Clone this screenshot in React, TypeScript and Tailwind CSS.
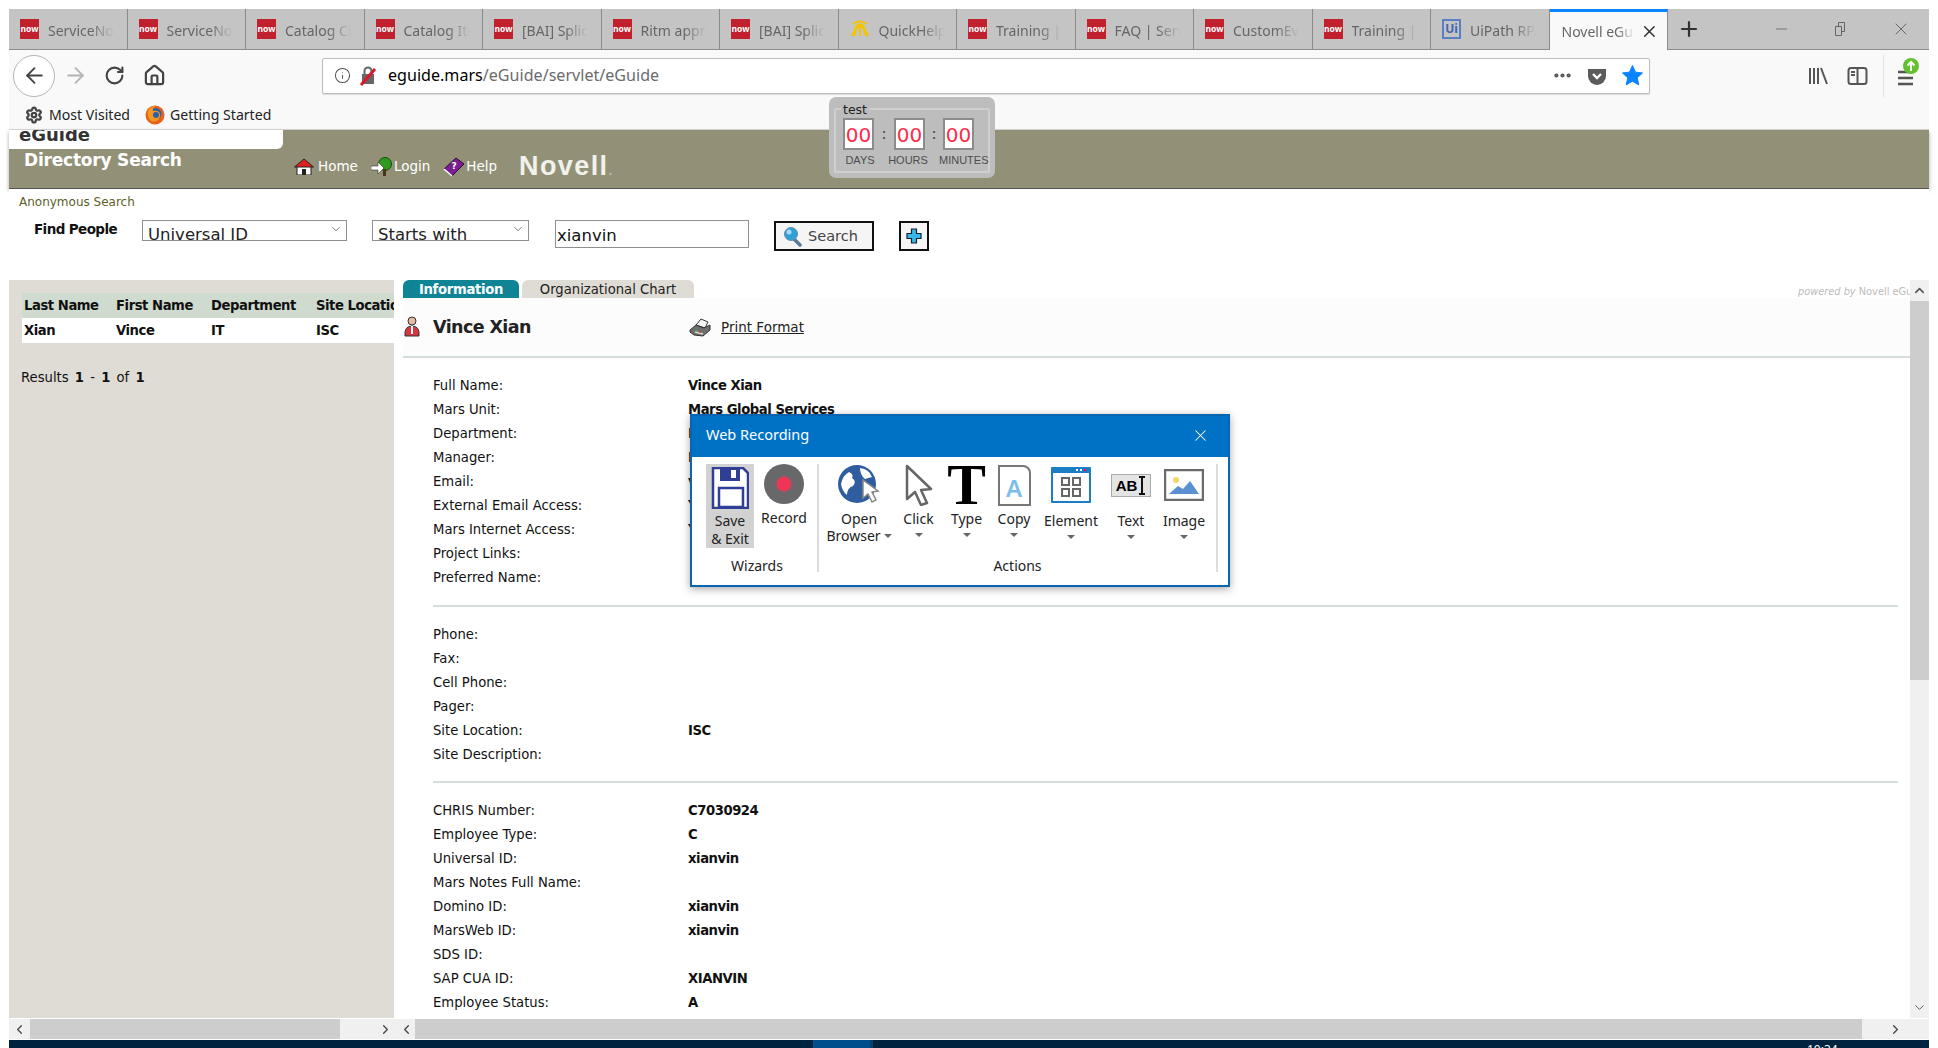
import { ArrowLeft, ArrowRight, ChevronDown, ChevronLeft, ChevronRight, ChevronUp, House, Info, MoreHorizontal, Plus, RotateCw, Settings, X } from "lucide-react";

const ui = "font-['Noto_Sans',sans-serif]";
const page = "font-['DejaVu_Sans',sans-serif]";

const tabs = [
    { title: "ServiceNow", icon: "now" },
    { title: "ServiceNow", icon: "now" },
    { title: "Catalog Client", icon: "now" },
    { title: "Catalog Item", icon: "now" },
    { title: "[BAI] Splice", icon: "now" },
    { title: "Ritm approval", icon: "now" },
    { title: "[BAI] Splice", icon: "now" },
    { title: "QuickHelp", icon: "qh" },
    { title: "Training | Service", icon: "now" },
    { title: "FAQ | Service", icon: "now" },
    { title: "CustomEvent", icon: "now" },
    { title: "Training | Service", icon: "now" },
    { title: "UiPath RPA", icon: "ui" },
];

const group1 = [
    ["Full Name:", "Vince Xian"],
    ["Mars Unit:", "Mars Global Services"],
    ["Department:", "IT"],
    ["Manager:", "L"],
    ["Email:", "v"],
    ["External Email Access:", "Y"],
    ["Mars Internet Access:", "Y"],
    ["Project Links:", ""],
    ["Preferred Name:", ""],
];
const group2 = [
    ["Phone:", ""],
    ["Fax:", ""],
    ["Cell Phone:", ""],
    ["Pager:", ""],
    ["Site Location:", "ISC"],
    ["Site Description:", ""],
];
const group3 = [
    ["CHRIS Number:", "C7030924"],
    ["Employee Type:", "C"],
    ["Universal ID:", "xianvin"],
    ["Mars Notes Full Name:", ""],
    ["Domino ID:", "xianvin"],
    ["MarsWeb ID:", "xianvin"],
    ["SDS ID:", ""],
    ["SAP CUA ID:", "XIANVIN"],
    ["Employee Status:", "A"],
];

const Favicon = ({ kind }: { kind: string }) => {
    if (kind === "qh") {
        return (
            <svg width="20" height="20" viewBox="0 0 20 20" className="shrink-0">
                <path d="M1 17 L6 6 Q10 3 14 6 L19 17 H15 L12.5 9 H11 V17 H9 V9 H7.5 L5 17 Z" fill="#f5c400" />
                <path d="M3 5 Q10 0 17 5" stroke="#f5c400" strokeWidth="2" fill="none" />
            </svg>
        );
    }
    if (kind === "ui") {
        return (
            <span className="w-[19px] h-[20px] shrink-0 border-2 border-[#5b7fc4] text-[#3f66b0] text-[12px] font-bold leading-[16px] text-center">Ui</span>
        );
    }
    return (
        <span className="w-[19px] h-[20px] shrink-0 bg-[#c1202d] text-white text-[8.5px] font-bold leading-[20px] text-center">now</span>
    );
};

const TabBar = () => (
    <div className={`flex h-[41px] bg-[#c4c4c4] border-b border-[#8c8c8c] ${ui}`}>
        {tabs.map((t, i) => (
            <div key={i} className="w-[118.5px] flex items-center gap-[9px] pl-[11px] pr-[6px] border-r border-[#8a8a8a]">
                <Favicon kind={t.icon} />
                <span className="w-[66px] text-[14px] pt-[2px] text-[#666] whitespace-nowrap overflow-hidden [mask-image:linear-gradient(to_right,black_65%,transparent)]">{t.title}</span>
            </div>
        ))}
        <div className="w-[118px] h-[41px] flex items-center pl-[12px] pr-[8px] bg-[#f9f9f9] border-t-[3px] border-[#0a84ff] border-r border-r-[#8a8a8a]">
            <span className="text-[14px] text-[#666] whitespace-nowrap overflow-hidden w-[74px] [mask-image:linear-gradient(to_right,black_75%,transparent)]">Novell eGuide</span>
            <X size={19} strokeWidth={2} className="text-[#333] ml-[5px]" />
        </div>
        <Plus size={24} strokeWidth={2.2} className="text-[#333] ml-[9px] mt-[8px]" />
        <div className="flex-1 flex items-center justify-end text-[#666]">
            <svg width="14" height="14" viewBox="0 0 14 14" className="mr-[44px]"><path d="M1 7h11" stroke="#777" strokeWidth="1" /></svg>
            <svg width="14" height="16" viewBox="0 0 14 16" className="mr-[44px]"><path d="M2.5 5.5h6v9h-6zM5.5 5V1.5h6v9H9" stroke="#666" strokeWidth="1" fill="none" /></svg>
            <X size={20} strokeWidth={1} className="mr-[18px] text-[#555]" />
        </div>
    </div>
);

const NavBar = () => (
    <div className="flex items-center h-[53px] bg-[#f9f9f9] pl-[4px] pr-[12px] pb-[2px]">
        <div className="w-[42px] h-[42px] rounded-full bg-white border border-[#b5b5b5] flex items-center justify-center shrink-0">
            <ArrowLeft size={25} strokeWidth={1.8} className="text-[#444]" />
        </div>
        <ArrowRight size={25} strokeWidth={1.8} className="text-[#b4b4b4] ml-[8px] shrink-0" />
        <RotateCw size={21} strokeWidth={2.4} className="text-[#444] ml-[16px] shrink-0" />
        <House size={23} strokeWidth={2.3} className="text-[#444] ml-[18px] shrink-0" />
        <div className={`w-[1328px] h-[36px] ml-[156px] bg-white border border-[#bdbdbd] rounded-[2px] shadow-[0_1px_1px_rgba(0,0,0,0.12)] flex items-center pl-[11px] pr-[5px] shrink-0 ${ui}`}>
            <Info size={17} strokeWidth={1.5} className="text-[#555] shrink-0" />
            <svg width="18" height="20" viewBox="0 0 18 20" className="ml-[8px] shrink-0">
                <rect x="3" y="8" width="12" height="10" fill="#666" />
                <path d="M5.5 8V5a3.5 3.5 0 0 1 7 0v3" stroke="#666" strokeWidth="2" fill="none" />
                <path d="M2 19 L16 3" stroke="#e0162b" strokeWidth="3" />
            </svg>
            <span className="text-[16.1px] ml-[11px] text-black">eguide.mars<span className="text-[#6b6b6b]">/eGuide/servlet/eGuide</span></span>
            <div className="flex-1" />
            <MoreHorizontal size={21} strokeWidth={2.8} className="text-[#555]" />
            <svg width="20" height="20" viewBox="0 0 20 20" className="ml-[14px]">
                <path d="M1 3h18v7a9 9 0 0 1-18 0z" fill="#5c5c5c" />
                <path d="M6 8l4 4 4-4" stroke="#fff" strokeWidth="2.4" fill="none" />
            </svg>
            <svg width="23" height="23" viewBox="0 0 24 24" className="ml-[14px]">
                <path d="M12 1.5l3.2 7 7.3.8-5.5 5 1.6 7.5L12 18l-6.600 3.800 1.600-7.500-5.500-5 7.300-.8z" fill="#0a84ff" stroke="#0a84ff" strokeLinejoin="round" />
            </svg>
        </div>
        <div className="flex-1" />
        <svg width="21" height="20" viewBox="0 0 21 20" className="shrink-0">
            <path d="M2 2v16M6 2v16M10 2v16M13 2l6 16" stroke="#555" strokeWidth="2" fill="none" />
        </svg>
        <svg width="21" height="20" viewBox="0 0 21 20" className="ml-[18px] shrink-0">
            <rect x="1.500" y="2" width="18" height="16" rx="2.500" stroke="#555" strokeWidth="2" fill="none" />
            <path d="M10.500 2v16M4 6h4M4 9h4" stroke="#555" strokeWidth="2" />
        </svg>
        <div className="w-px h-[42px] bg-[#e2e2e2] ml-[15px] shrink-0" />
        <div className="relative w-[20px] h-[20px] ml-[13px] shrink-0">
            <svg width="18" height="18" viewBox="0 0 18 18" className="mt-[3px]"><path d="M1 3h15M1 9h15M1 15h15" stroke="#555" strokeWidth="2.500" /></svg>
            <svg width="16" height="16" viewBox="0 0 16 16" className="absolute -top-[8px] left-[6px]">
                <circle cx="8" cy="8" r="8" fill="#62c22e" />
                <path d="M8 13V4M4.500 7.500L8 4l3.500 3.500" stroke="#fff" strokeWidth="2" fill="none" />
            </svg>
        </div>
    </div>
);

const Bookmarks = () => (
    <div className={`flex items-center h-[27px] pb-[2px] bg-[#f9f9f9] border-b border-[#dcdcdc] pl-[16px] text-[14.1px] text-[#222] ${ui}`}>
        <Settings size={18} strokeWidth={3} className="text-[#444]" />
        <span className="ml-[6px]">Most Visited</span>
        <svg width="20" height="20" viewBox="0 0 20 20" className="ml-[15px]">
            <circle cx="10" cy="10" r="9.500" fill="#e8611a" />
            <circle cx="10.500" cy="9" r="6" fill="#2a5fb0" />
            <path d="M3 6 Q5 1 11 1 Q7 3 8 6 Q11 5 14 7 Q17 11 13 15 Q9 18 5 15 Q2 11 3 6z" fill="#f39a1e" />
            <circle cx="11" cy="10" r="3" fill="#2a5fb0" />
        </svg>
        <span className="ml-[5px]">Getting Started</span>
    </div>
);

const HomeIcon = () => (
    <svg width="20" height="17" viewBox="0 0 20 17" className="shrink-0">
        <rect x="3" y="8" width="14" height="9" fill="#fff" stroke="#222" />
        <rect x="8" y="11" width="4" height="6" fill="#222" />
        <path d="M0.500 9L10 1l9.500 8z" fill="#e01f1f" stroke="#222" />
    </svg>
);

const LoginIcon = () => (
    <svg width="21" height="20" viewBox="0 0 21 20" className="shrink-0">
        <circle cx="14" cy="7" r="6.500" fill="#2f9a1f" stroke="#174d10" />
        <rect x="12" y="12" width="3" height="7" fill="#4a3418" />
        <path d="M0 9h7V5l6 6-6 6v-4H0z" fill="#fff" stroke="#333" strokeWidth="0.600" />
    </svg>
);

const HelpIcon = () => (
    <svg width="22" height="20" viewBox="0 0 22 20" className="shrink-0">
        <path d="M1 12L13 1l8 6L9 19z" fill="#7b1e8f" stroke="#2c0a33" />
        <path d="M1 12l8 7" stroke="#fff" strokeWidth="1.500" />
        <text x="8.500" y="12" fontSize="9" fontWeight="700" fill="#fff" fontFamily="DejaVu Sans">?</text>
    </svg>
);

const EGuideHeader = () => (
    <div className={`relative flex h-[59px] bg-[#929178] border-b border-[#555] shadow-[0_2px_4px_rgba(0,0,0,0.35)] ${page}`}>
        <div className="w-[274px] shrink-0">
            <div className="h-[19px] bg-white rounded-br-[6px] overflow-hidden pl-[10px]">
                <div className="text-[#333] text-[18px] font-bold leading-[20px] -mt-[5px]">eGuide</div>
            </div>
            <div className="text-white text-[17px] font-bold pl-[15px] leading-[22px] tracking-[-0.2px]">Directory Search</div>
        </div>
        <div className="flex items-center h-[17px] mt-[28px] ml-[11px] text-white text-[13.5px]">
            <HomeIcon />
            <span className="ml-[4px]">Home</span>
            <span className="ml-[13px]"><LoginIcon /></span>
            <span className="ml-[2px]">Login</span>
            <span className="ml-[13px]"><HelpIcon /></span>
            <span className="ml-[1px]">Help</span>
            <span className="ml-[22px] text-[27px] font-['Liberation_Sans',sans-serif] font-bold tracking-[1.4px] text-[#f2f2ec]">Novell<span className="text-[#b9b9aa] text-[14px]">.</span></span>
        </div>
    </div>
);

const Timer = () => (
    <div className={`absolute left-[829px] top-[97px] w-[166px] h-[81px] bg-[#bdbdbd] rounded-[7px] px-[5px] pt-[11px] pb-[5px] ${page}`}>
        <div className="relative w-full h-full border-2 border-[#cfcfcf] rounded-[2px] pl-[7px] pt-[8px]">
            <span className="absolute -top-[7px] left-[5px] bg-[#bdbdbd] px-[2px] text-[12.5px] leading-[14px] text-[#222]">test</span>
            <div className="flex items-center">
                <span className="w-[31px] h-[32px] bg-white border-2 border-[#8c8c8c] text-[#ff2b4a] text-[20px] leading-[30px] text-center">00</span>
                <span className="w-[20px] text-center text-[#444] text-[15px]">:</span>
                <span className="w-[31px] h-[32px] bg-white border-2 border-[#8c8c8c] text-[#ff2b4a] text-[20px] leading-[30px] text-center">00</span>
                <span className="w-[18px] text-center text-[#444] text-[15px]">:</span>
                <span className="w-[31px] h-[32px] bg-white border-2 border-[#8c8c8c] text-[#ff2b4a] text-[20px] leading-[30px] text-center">00</span>
            </div>
            <div className="flex mt-[3px] text-[11px] leading-[14px] text-[#4d4d4d] font-['Liberation_Sans',sans-serif]">
                <span className="w-[34px] text-center">DAYS</span>
                <span className="w-[62px] text-center">HOURS</span>
                <span className="w-[46px] text-center">MINUTES</span>
            </div>
        </div>
    </div>
);

const SearchBar = () => (
    <div className={`relative h-[91px] bg-white ${page}`}>
        <div className="pl-[10px] pt-[5px] text-[12px] leading-[16px] text-[#5e5e28]">Anonymous Search</div>
        <div className="flex items-start pl-[25px] mt-[10px]">
            <span className="w-[108px] text-[13.5px] font-bold tracking-[-0.6px] text-[#111] leading-[18px]">Find People</span>
            <div className="w-[205px] h-[21px] border border-[#8f8f8f] overflow-hidden flex justify-between pl-[5px] pr-[3px] text-[16.5px] leading-[28px] text-[#222]">
                <span>Universal ID</span>
                <ChevronDown size={14} strokeWidth={1} className="text-[#222] mt-[1px]" />
            </div>
            <div className="w-[157px] h-[21px] ml-[25px] border border-[#8f8f8f] overflow-hidden flex justify-between pl-[5px] pr-[3px] text-[16.5px] leading-[28px] text-[#222]">
                <span>Starts with</span>
                <ChevronDown size={14} strokeWidth={1} className="text-[#222] mt-[1px]" />
            </div>
            <div className="w-[194px] h-[28px] ml-[26px] border border-[#8f8f8f] pl-[1px] text-[16.5px] leading-[29px] text-[#111]">xianvin</div>
            <div className="w-[100px] h-[30px] ml-[25px] mt-[1px] border-2 border-[#111] bg-[#f5f5f5] flex items-center pl-[7px]">
                <svg width="20" height="21" viewBox="0 0 20 21">
                    <path d="M11 13l6 6" stroke="#5a7a95" strokeWidth="3.500" strokeLinecap="round" />
                    <circle cx="8" cy="8" r="6.500" fill="#2f9fd8" stroke="#6d8aa0" />
                    <circle cx="6" cy="6" r="2.500" fill="#a8dcf5" />
                </svg>
                <span className="ml-[5px] text-[14.5px] text-[#444] leading-[20px]">Search</span>
            </div>
            <div className="w-[30px] h-[30px] ml-[25px] mt-[1px] border-2 border-[#111] bg-[#f5f5f5] flex items-center justify-center">
                <svg width="16" height="16" viewBox="0 0 16 16">
                    <path d="M5.500 1h5v4.500H15v5h-4.500V15h-5v-4.500H1v-5h4.500z" fill="#35b8e8" stroke="#123" strokeWidth="1.200" />
                </svg>
            </div>
        </div>
    </div>
);

const Sidebar = () => (
    <div className={`w-[385px] shrink-0 bg-[#dfdcd5] pt-[13px] pl-[13px] overflow-hidden text-[13.2px] leading-[26px] text-[#111] ${page}`}>
        <div className="flex h-[25px] bg-[#d0dbd0] font-bold tracking-[-0.45px] whitespace-nowrap overflow-hidden pl-[2px]">
            <span className="w-[92px] shrink-0">Last Name</span>
            <span className="w-[95px] shrink-0">First Name</span>
            <span className="w-[105px] shrink-0">Department</span>
            <span className="shrink-0">Site Location</span>
        </div>
        <div className="flex h-[25px] bg-white font-bold tracking-[-0.45px] whitespace-nowrap pl-[2px]">
            <span className="w-[92px] shrink-0">Xian</span>
            <span className="w-[95px] shrink-0">Vince</span>
            <span className="w-[105px] shrink-0">IT</span>
            <span className="shrink-0">ISC</span>
        </div>
        <div className="mt-[22px] -ml-[1px] [word-spacing:2px]">Results <b>1</b> - <b>1</b> of <b>1</b></div>
    </div>
);

const FieldGroup = ({ rows }: { rows: string[][] }) => (
    <div className="ml-[30px]">
        {rows.map(([label, value]) => (
            <div key={label} className="flex h-[24px] items-center text-[13.2px] text-[#111] whitespace-nowrap">
                <span className="w-[255px] shrink-0">{label}</span>
                <span className="font-bold tracking-[-0.45px]">{value}</span>
            </div>
        ))}
    </div>
);

const Detail = () => (
    <div className={`relative flex-1 min-w-0 pl-[9px] overflow-hidden ${page}`}>
        <div className="flex h-[18px] justify-between text-[13.2px] leading-[19px]">
            <div className="flex">
                <span className="w-[116px] bg-[#0e8494] rounded-t-[6px] text-white font-bold tracking-[-0.3px] text-center">Information</span>
                <span className="w-[172px] ml-[3px] bg-[#dfdcd5] rounded-t-[6px] text-[#222] text-center">Organizational Chart</span>
            </div>
            <span className="w-[112px] overflow-hidden whitespace-nowrap text-[9.8px] text-[#bbb] italic leading-[23px]">powered by <span className="not-italic">Novell eGuide</span></span>
        </div>
        <div className="flex items-center h-[60px] bg-[#fcfcfc] border-b-2 border-[#d5ded9]">
            <svg width="18" height="22" viewBox="0 0 18 22" className="shrink-0">
                <circle cx="9" cy="5" r="4" fill="#e6b9a0" stroke="#333" />
                <path d="M2 20 Q1 10 9 10 Q17 10 16 20z" fill="#d8353f" stroke="#333" />
                <path d="M9 10v8" stroke="#fff" strokeWidth="2" />
            </svg>
            <span className="ml-[12px] w-[256px] text-[17.5px] font-bold tracking-[-0.6px] text-[#222]">Vince Xian</span>
            <svg width="22" height="20" viewBox="0 0 22 20" className="shrink-0">
                <path d="M7 8l5-6 7 3-3 6z" fill="#f4f4f4" stroke="#333" />
                <path d="M1 13l6-5 8 3 6-3v5l-7 6-9-1-4-3z" fill="#6f6f6f" stroke="#333" />
                <path d="M6 15l8 2" stroke="#ddd" strokeWidth="1.500" />
                <circle cx="8" cy="14" r="1" fill="#3fbf3f" />
                <circle cx="11" cy="15" r="1" fill="#e03030" />
            </svg>
            <span className="ml-[10px] text-[13.5px] text-[#222] underline">Print Format</span>
        </div>
        <div className="pt-[16px]">
            <FieldGroup rows={group1} />
        </div>
        <hr className="mt-[15px] ml-[30px] mr-[12px] border-t-2 border-[#d5ded9]" />
        <div className="pt-[16px]">
            <FieldGroup rows={group2} />
        </div>
        <hr className="mt-[14px] ml-[30px] mr-[12px] border-t-2 border-[#d5ded9]" />
        <div className="pt-[16px]">
            <FieldGroup rows={group3} />
        </div>
    </div>
);

const VScrollbar = () => (
    <div className="w-[19px] shrink-0 flex flex-col bg-[#f0f0f0] text-[#555]">
        <div className="h-[21px] flex items-center justify-center"><ChevronUp size={15} strokeWidth={2.5} /></div>
        <div className="h-[379px] bg-[#cdcdcd]" />
        <div className="flex-1" />
        <div className="h-[21px] flex items-center justify-center"><ChevronDown size={15} strokeWidth={1.500} /></div>
    </div>
);

const HScrollbars = () => (
    <div className="flex h-[20px] mt-[1px] bg-[#f0f0f0] text-[#444]">
        <div className="w-[21px] flex items-center justify-center"><ChevronLeft size={15} /></div>
        <div className="w-[310px] bg-[#cdcdcd]" />
        <div className="w-[54px] flex items-center justify-end pr-[1px]"><ChevronRight size={15} /></div>
        <div className="w-[20px] flex items-center justify-end"><ChevronLeft size={15} /></div>
        <div className="w-[1447px] ml-[1px] bg-[#cdcdcd]" />
        <div className="flex-1 flex items-center justify-center"><ChevronRight size={15} /></div>
    </div>
);

const Taskbar = () => (
    <div className="relative flex h-[9px] mt-[1px] bg-[#00243f] overflow-hidden">
        <div className="w-[804px]" />
        <div className="w-[57px] bg-[#004f8c]" />
        <div className="w-[3px] bg-[#0b3f68]" />
        <span className="absolute left-[1798px] top-[3px] text-[12px] leading-[14px] text-white font-['Noto_Sans',sans-serif]">10:34</span>
    </div>
);

const RibbonItem = ({ label, icon, w, caret, low }: { label: string; icon: React.ReactNode; w: string; caret?: boolean; low?: boolean }) => (
    <div className={`${w} flex flex-col items-center shrink-0`}>
        <div className="h-[42px] flex items-center justify-center">{icon}</div>
        <span className={`${low ? "mt-[6px]" : "mt-[4px]"} text-[14px] leading-[18px] text-[#222]`}>{label}</span>
        {caret && <span className="mt-[5px] w-0 h-0 border-x-[4px] border-x-transparent border-t-[4px] border-t-[#666]" />}
    </div>
);

const WebRecording = () => (
    <div className={`absolute left-[690px] top-[414px] w-[540px] h-[173px] bg-white border-2 border-[#0a64b0] shadow-[0_2px_8px_rgba(0,0,0,0.35)] ${ui}`}>
        <div className="flex items-center justify-between h-[41px] bg-[#0072c6] pl-[14px] pr-[18px] pb-[3px]">
            <span className="text-white text-[14.5px]">Web Recording</span>
            <X size={19} strokeWidth={1.300} className="text-white" />
        </div>
        <div className="flex h-[128px] pt-[7px] pl-[14px]">
            <div className="w-[111px] shrink-0 flex flex-col">
                <div className="flex">
                    <div className="w-[48px] h-[84px] bg-[#d2d2d2] flex flex-col items-center pt-[3px]">
                        <svg width="38" height="42" viewBox="0 0 38 42">
                            <path d="M2 1h30l5 5v35H2z" fill="#fff" stroke="#2f3f96" strokeWidth="2.500" />
                            <rect x="9" y="1" width="20" height="13" fill="#2f3f96" />
                            <rect x="20" y="3" width="5" height="8" fill="#fff" />
                            <rect x="8" y="21" width="24" height="19" fill="#fff" stroke="#2f3f96" strokeWidth="2.500" />
                        </svg>
                        <span className="text-[14px] leading-[18px] text-[#222] mt-[3px] text-center">Save<br />&amp; Exit</span>
                    </div>
                    <div className="w-[60px] flex flex-col items-center">
                        <svg width="40" height="40" viewBox="0 0 40 40">
                            <circle cx="20" cy="20" r="20" fill="#68686b" />
                            <circle cx="20" cy="20" r="7.500" fill="#ee3557" />
                        </svg>
                        <span className="text-[14px] leading-[18px] text-[#222] mt-[5px]">Record</span>
                    </div>
                </div>
                <div className="text-[14px] leading-[18px] text-[#222] text-center mt-[9px] pr-[9px]">Wizards</div>
            </div>
            <div className="w-[2px] h-[108px] bg-[#dcdcdc] shrink-0" />
            <div className="w-[397px] shrink-0 flex flex-col">
                <div className="flex h-[84px] pl-[3px]">
                    <div className="w-[72px] flex flex-col items-center shrink-0 pl-[2px]">
                        <div className="h-[42px] flex items-center justify-center">
                            <svg width="42" height="42" viewBox="0 0 42 42">
                                <circle cx="19" cy="20" r="19" fill="#2f5da0" />
                                <path d="M3 20Q5 11 11 8Q16 10 14 14Q19 17 15 22Q9 24 9 31Q4 27 3 20zM22 4Q31 5 34 13L27 15Q22 11 22 4z" fill="#fff" />
                                <path d="M25 16l0 18 5-4 4 8 4-2-4-8 6-1z" fill="#fff" stroke="#888" strokeWidth="1.500" />
                            </svg>
                        </div>
                        <span className="mt-[4px] text-[14px] leading-[17px] text-[#222]">Open</span>
                        <span className="flex items-center text-[14px] leading-[17px] text-[#222]">Browser<span className="ml-[3px] w-0 h-0 border-x-[4px] border-x-transparent border-t-[4px] border-t-[#666]" /></span>
                    </div>
                    <RibbonItem w="w-[49px]" label="Click" caret icon={
                        <svg width="30" height="42" viewBox="0 0 30 42"><path d="M3 2l24 23-10 1 6 13-6 2-6-13-8 7z" fill="#fff" stroke="#666" strokeWidth="2.500" strokeLinejoin="round" /></svg>
                    } />
                    <RibbonItem w="w-[47px]" label="Type" caret icon={
                        <span className="font-['Liberation_Serif',serif] font-bold text-[58px] leading-[42px] text-black">T</span>
                    } />
                    <RibbonItem w="w-[48px]" label="Copy" caret icon={
                        <span className="relative w-[33px] h-[41px] border-2 border-[#777] rounded-tr-[8px] bg-white flex items-end justify-center font-['Noto_Sans',sans-serif] font-semibold text-[24px] leading-[32px] text-[#7dbfe8]">A</span>
                    } />
                    <RibbonItem w="w-[66px]" low label="Element" caret icon={
                        <svg width="40" height="36" viewBox="0 0 40 36">
                            <rect x="0" y="0" width="40" height="36" rx="1" fill="#1b7dc4" />
                            <rect x="2" y="6" width="36" height="28" fill="#fff" />
                            <rect x="25" y="2" width="2" height="2" fill="#fff" /><rect x="29" y="2" width="2" height="2" fill="#fff" /><rect x="33" y="2" width="2" height="2" fill="#f05" />
                            <path d="M11 11h7v7h-7zM22 11h7v7h-7zM11 22h7v7h-7zM22 22h7v7h-7z" fill="none" stroke="#666" strokeWidth="2" />
                        </svg>
                    } />
                    <RibbonItem w="w-[54px]" low label="Text" caret icon={
                        <span className="w-[40px] h-[23px] bg-[#e4e4e4] border border-[#aaa] flex items-center justify-center font-['Liberation_Sans',sans-serif] font-bold text-[15px] leading-[21px] text-black">
                            AB
                            <svg width="8" height="19" viewBox="0 0 8 19" className="ml-[1px]"><path d="M1 1h6M4 1v17M1 18h6" stroke="#111" strokeWidth="2" fill="none" /></svg>
                        </span>
                    } />
                    <RibbonItem w="w-[52px]" low label="Image" caret icon={
                        <svg width="40" height="32" viewBox="0 0 40 32">
                            <rect x="1" y="1" width="38" height="30" fill="#fff" stroke="#6b6b6b" strokeWidth="2.500" />
                            <circle cx="12" cy="11" r="3" fill="#f4d667" />
                            <path d="M5 25L14 17l5 3 7-8 9 13z" fill="#5a8fd0" />
                        </svg>
                    } />
                </div>
                <div className="text-[14px] leading-[18px] text-[#222] text-center mt-[9px]">Actions</div>
            </div>
            <div className="w-[2px] h-[108px] bg-[#dcdcdc] shrink-0" />
        </div>
    </div>
);

const App = () => {
    return (
        <div className="relative w-[1938px] h-[1048px] overflow-hidden bg-white pl-[9px] pr-[9px] pt-[9px]">
            <TabBar />
            <NavBar />
            <Bookmarks />
            <EGuideHeader />
            <SearchBar />
            <div className="flex h-[738px]">
                <Sidebar />
                <Detail />
                <VScrollbar />
            </div>
            <HScrollbars />
            <Taskbar />
            <Timer />
            <WebRecording />
        </div>
    );
};

export default App;
